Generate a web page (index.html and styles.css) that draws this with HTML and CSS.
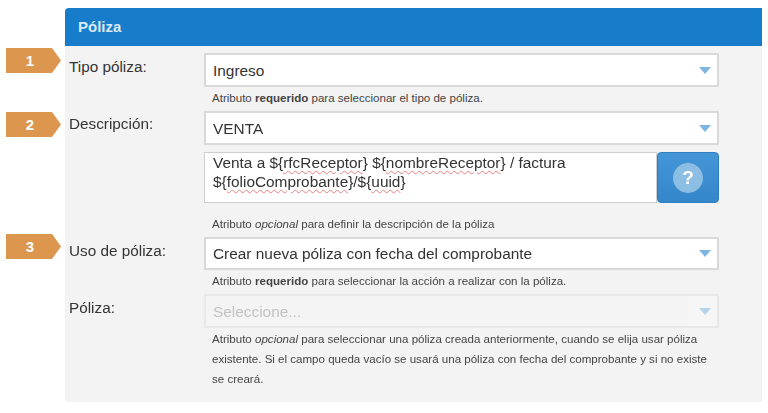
FILE: index.html
```html
<!DOCTYPE html>
<html lang="es">
<head>
<meta charset="utf-8">
<title>Póliza</title>
<link rel="stylesheet" href="styles.css">
</head>
<body>
<div class="page">
  <section class="panel">
    <h2 class="panel-title">Póliza</h2>
    <div class="panel-body">
      <div class="row row-first">
        <span class="badge badge-1">1</span>
        <label class="label">Tipo póliza:</label>
        <div class="field">
          <div class="select"><span>Ingreso</span><i class="caret"></i></div>
          <p class="help help-one">Atributo <b>requerido</b> para seleccionar el tipo de póliza.</p>
        </div>
      </div>
      <div class="row">
        <span class="badge badge-2">2</span>
        <label class="label label-tight">Descripción:</label>
        <div class="field">
          <div class="select"><span>VENTA</span><i class="caret"></i></div>
          <div class="editor">
            <div class="textarea">Venta a ${<u>rfcReceptor</u>} ${<u>nombreReceptor</u>} / factura<br>${<u>folioComprobante</u>}/${<u>uuid</u>}</div>
            <button class="help-btn" type="button"><span class="help-dot">?</span></button>
          </div>
          <p class="help help-two">Atributo <em>opcional</em> para definir la descripción de la póliza</p>
        </div>
      </div>
      <div class="row">
        <span class="badge badge-3">3</span>
        <label class="label">Uso de póliza:</label>
        <div class="field">
          <div class="select select-short"><span>Crear nueva póliza con fecha del comprobante</span><i class="caret"></i></div>
          <p class="help help-one">Atributo <b>requerido</b> para seleccionar la acción a realizar con la póliza.</p>
        </div>
      </div>
      <div class="row">
        <label class="label">Póliza:</label>
        <div class="field">
          <div class="select select-disabled"><span>Seleccione...</span><span class="caret-box"><i class="caret"></i></span></div>
          <p class="help help-long">Atributo <em>opcional</em> para seleccionar una póliza creada anteriormente, cuando se elija usar póliza existente. Si el campo queda vacío se usará una póliza con fecha del comprobante y si no existe se creará.</p>
        </div>
      </div>
    </div>
  </section>
</div>
</body>
</html>
```
FILE: styles.css
```css
* { box-sizing: border-box; }
html, body { margin: 0; padding: 0; background: #fff; }
body {
  width: 768px;
  height: 413px;
  overflow: hidden;
  font-family: "Liberation Sans", Arial, sans-serif;
  color: #333;
}
.page { padding: 8px 6px 0 65px; filter: blur(0.45px); }
.panel { width: 697px; height: 394px; background: #f3f3f3; border-radius: 4px 0 0 4px; }
.panel-title {
  margin: 0;
  height: 38px;
  padding-left: 13px;
  background: #177cc9;
  border-radius: 4px 0 0 0;
  color: #d8e9f6;
  font-size: 15px;
  line-height: 38px;
  font-weight: bold;
}
.panel-body { padding-top: 7px; }
.row {
  position: relative;
  display: grid;
  grid-template-columns: 139px 515px;
}
.label {
  padding: 4px 0 0 4px;
  font-size: 15.3px;
  line-height: 20px;
  color: #333;
}
.label-tight { padding-top: 3px; }
.select {
  display: flex;
  align-items: center;
  justify-content: space-between;
  height: 34px;
  padding: 1px 6px 0 7px;
  background: #fff;
  border: 2px solid #d9d9d9;
  font-size: 15.4px;
  color: #333;
}
.select-short { height: 33px; padding-top: 0; }
.select-disabled {
  padding: 0;
  padding-left: 7px;
  background: #f4f4f4;
  border-color: #e8e8e8;
  color: #c2c2c2;
}
.select-disabled > span:first-child { padding-top: 2px; }
.caret-box {
  display: flex;
  align-items: center;
  justify-content: flex-end;
  align-self: stretch;
  width: 29px;
  padding-right: 6px;
  background: #f6f6f6;
}
.caret {
  width: 0;
  height: 0;
  border-left: 6px solid transparent;
  border-right: 6px solid transparent;
  border-top: 7px solid #7db6e2;
}
.select-disabled .caret { border-top-color: #b5d4ec; }
.help { margin: 0; padding-left: 8px; font-size: 11.55px; color: #444; }
.help-one { height: 24px; padding-top: 1px; line-height: 20px; }
.help-two { height: 34px; padding-top: 11px; line-height: 20px; }
.help-long { height: 74px; padding-top: 1px; padding-right: 6px; line-height: 20px; }
.help b { font-weight: bold; }
.editor { display: flex; height: 51px; margin-top: 7px; }
.textarea {
  width: 453px;
  padding: 0 8px;
  background: #fff;
  border: 1px solid #cfcfcf;
  font-size: 15.4px;
  line-height: 19px;
  color: #333;
}
.textarea u {
  text-decoration: underline wavy #f07f7f 1px;
  text-underline-offset: 2px;
}
.help-btn {
  display: flex;
  align-items: center;
  justify-content: center;
  width: 62px;
  padding: 0;
  border: 1px solid #2f7fc0;
  border-radius: 4px;
  background: linear-gradient(#4396d6, #3587cb);
}
.help-dot {
  width: 30px;
  height: 30px;
  border-radius: 50%;
  background: #8cbde3;
  color: #fff;
  font: bold 19px/30px "Liberation Sans", Arial, sans-serif;
  text-align: center;
}
.badge {
  position: absolute;
  left: -59px;
  width: 55px;
  height: 25px;
  background: #dc964e;
  clip-path: polygon(0 0, 46px 0, 100% 50%, 46px 100%, 0 100%);
  color: #fff;
  font-size: 15px;
  font-weight: bold;
  line-height: 25px;
  text-align: center;
  padding-right: 7px;
}
.badge-1 { top: -5px; }
.badge-2 { top: 1px; }
.badge-3 { top: -3px; }
```
